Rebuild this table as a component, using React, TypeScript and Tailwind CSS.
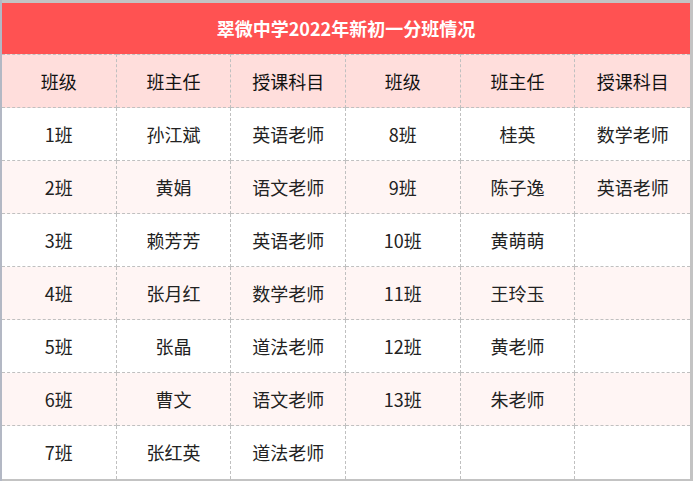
const rows = [
  ['1班', '孙江斌', '英语老师', '8班', '桂英', '数学老师'],
  ['2班', '黄娟', '语文老师', '9班', '陈子逸', '英语老师'],
  ['3班', '赖芳芳', '英语老师', '10班', '黄萌萌', ''],
  ['4班', '张月红', '数学老师', '11班', '王玲玉', ''],
  ['5班', '张晶', '道法老师', '12班', '黄老师', ''],
  ['6班', '曹文', '语文老师', '13班', '朱老师', ''],
  ['7班', '张红英', '道法老师', '', '', ''],
];

const headers = ['班级', '班主任', '授课科目', '班级', '班主任', '授课科目'];

const App = () => {
  return (
    <div
      className="w-[693px] h-[481px] bg-[#c3c3c3] pt-[3px] pr-[3px] pb-[3px] border-l-2 border-[#b3b8c4]"
      style={{ fontFamily: '"Noto Sans CJK SC", "Noto Sans", sans-serif' }}
    >
      <div className="w-[688px] bg-white">
        <div className="h-[51px] bg-[#ff5252] flex items-center justify-center text-white text-[18px] font-bold">
          翠微中学2022年新初一分班情况
        </div>
        <div className="grid grid-cols-6 bg-[#ffdedc]">
          {headers.map((h, i) => (
            <div
              key={i}
              className={`h-[54px] flex items-center justify-center text-[18px] text-[#111] border-t border-b border-dashed border-[#c0c0c0] ${i < 5 ? 'border-r' : ''}`}
            >
              {h}
            </div>
          ))}
        </div>
        {rows.map((row, r) => (
          <div key={r} className={`grid grid-cols-6 ${r % 2 === 1 ? 'bg-[#fff5f4]' : 'bg-white'}`}>
            {row.map((c, i) => (
              <div
                key={i}
                className={`h-[53px] flex items-center justify-center text-[18px] text-[#222] border-dashed border-[#c0c0c0] ${r < 6 ? 'border-b' : ''} ${i < 5 ? 'border-r' : ''}`}
              >
                {c}
              </div>
            ))}
          </div>
        ))}
      </div>
    </div>
  );
};

export default App;
